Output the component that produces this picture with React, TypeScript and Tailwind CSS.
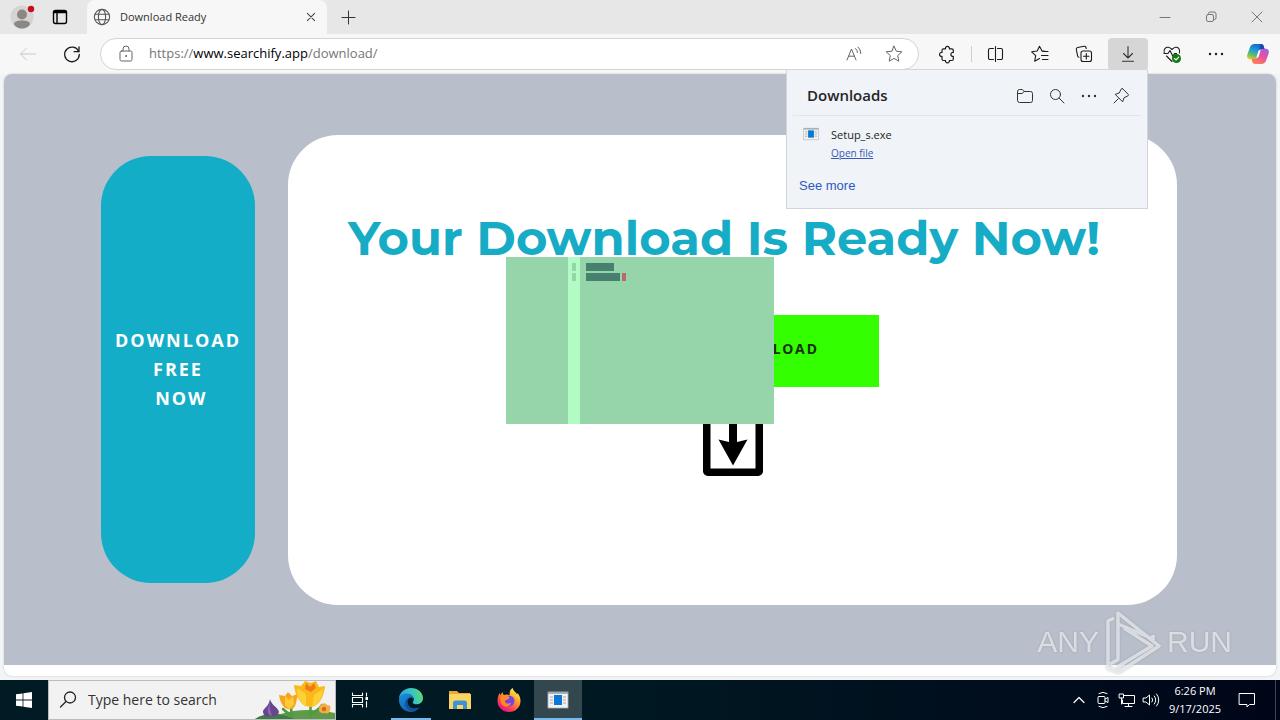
import type { ReactNode } from "react";

type IconProps = { children: ReactNode; size?: number; className?: string; box?: string; width?: number };

const Icon = ({ children, size = 20, className = "", box = "0 0 20 20", width = 1 }: IconProps) => (
    <svg
        width={size}
        height={size}
        viewBox={box}
        fill="none"
        stroke="currentColor"
        strokeWidth={width}
        strokeLinecap="round"
        strokeLinejoin="round"
        className={className}
        aria-hidden="true"
    >
        {children}
    </svg>
);

const STAR = "M10 2.2 L12.3 7.2 L17.8 7.8 L13.7 11.6 L14.8 17.2 L10 14.4 L5.2 17.2 L6.3 11.6 L2.2 7.8 L7.7 7.2 Z";

const ToolButton = ({ label, children }: { label: string; children: ReactNode }) => (
    <button type="button" aria-label={label} className="flex h-8 w-10 shrink-0 items-center justify-center rounded text-[#1b1b1b]">
        {children}
    </button>
);

const Dots = () => (
    <Icon>
        <g fill="currentColor" stroke="none">
            <circle cx="4" cy="10" r="1.2" />
            <circle cx="10" cy="10" r="1.2" />
            <circle cx="16" cy="10" r="1.2" />
        </g>
    </Icon>
);

const ExeIcon = ({ size }: { size: number }) => (
    <svg width={size} height={size} viewBox="0 0 22 22" aria-hidden="true">
        <rect x="1" y="3" width="20" height="16" fill="#f2f2f2" stroke="#a9b4bd" strokeWidth="0.8" />
        <path d="M1 4h20" stroke="#8d999f" strokeWidth="1.4" />
        <path d="M3 8h3M3 11h3M3 14h3M16 8h3M16 11h3M16 14h3" stroke="#a5a5a5" strokeWidth="1.2" />
        <rect x="7" y="6" width="8" height="10" fill="#0b78d8" />
    </svg>
);

const TabStrip = () => (
    <div className="flex h-[34px] items-stretch bg-[#e7e7e7]">
        <button type="button" aria-label="Profile" className="flex w-11 items-center justify-center">
            <svg width="26" height="26" viewBox="0 0 26 26" aria-hidden="true">
                <circle cx="13" cy="13" r="11.5" fill="#d6d3d1" />
                <circle cx="13" cy="10.5" r="5" fill="#8b8785" />
                <path d="M5 20.500c0-3 3-4 8-4s8 1 8 4c-1.800 2.500-4.500 4-8 4s-6.200-1.500-8-4z" fill="#8b8785" />
                <circle cx="22" cy="5" r="3.200" fill="#c50f1f" />
            </svg>
        </button>
        <button type="button" aria-label="Tab actions" className="flex w-8 items-center justify-center text-black">
            <Icon width={1.4}>
                <rect x="3.500" y="3.500" width="13" height="13" rx="2" />
                <path d="M4 5h12" strokeWidth="2.400" />
                <path d="M7 6v10" />
            </Icon>
        </button>
        <div className="ml-[11px] flex w-60 items-center rounded-t-lg bg-[#f7f7f7] pl-[6px] pr-2">
            <Icon size={18} className="text-[#555]" width={1.2}>
                <circle cx="10" cy="10" r="8.500" />
                <ellipse cx="10" cy="10" rx="4" ry="8.500" />
                <path d="M2.500 7h15M2.500 13h15" />
            </Icon>
            <span className="ml-[9px] flex-1 text-[11px] text-[#333]">Download Ready</span>
            <button type="button" aria-label="Close tab" className="text-[#444]">
                <Icon size={16} width={1.3}>
                    <path d="M5.500 5.500l9 9M14.500 5.500l-9 9" />
                </Icon>
            </button>
        </div>
        <button type="button" aria-label="New tab" className="flex w-[42px] items-center justify-center text-[#333]">
            <Icon width={1}>
                <path d="M10.500 4v13M4 10.500h13" />
            </Icon>
        </button>
        <div className="ml-auto flex text-[#777]">
            <button type="button" aria-label="Minimize" className="flex w-[46px] items-center justify-center">
                <Icon width={1}><path d="M5 10.500h10" /></Icon>
            </button>
            <button type="button" aria-label="Restore" className="flex w-[46px] items-center justify-center">
                <Icon width={1}>
                    <rect x="5.500" y="7.500" width="7" height="7" rx="1.500" />
                    <path d="M7.500 7V6.500a1.500 1.500 0 0 1 1.500-1.500h4a2 2 0 0 1 2 2v4a1.500 1.500 0 0 1-1.500 1.500h-.5" />
                </Icon>
            </button>
            <button type="button" aria-label="Close" className="flex w-[46px] items-center justify-center">
                <Icon width={1}><path d="M5 5l10 10M15 5l-10 10" /></Icon>
            </button>
        </div>
    </div>
);

const DownloadsPanel = () => (
    <section className="absolute right-0 top-[31px] z-20 w-[362px] border border-[#d3d5dc] bg-[#f0f3f8] pb-3">
        <header className="mx-1.5 flex h-[46px] items-center border-b border-[#e2e5ea] pl-3.5 pt-[6px]">
            <h2 className="flex-1 text-[15px] font-semibold text-[#242424]">Downloads</h2>
            <div className="flex text-[#333]">
                <button type="button" aria-label="Open downloads folder" className="flex w-8 justify-center">
                    <Icon>
                        <path d="M2.500 5.500a2 2 0 0 1 2-2h2.800l1.900 2h6.300a2 2 0 0 1 2 2v7a2 2 0 0 1-2 2h-11a2 2 0 0 1-2-2z" />
                        <path d="M2.500 7.500h4.600l2.100-2" />
                    </Icon>
                </button>
                <button type="button" aria-label="Search downloads" className="flex w-8 justify-center">
                    <Icon>
                        <circle cx="8.500" cy="8.500" r="5" />
                        <path d="M12.200 12.200l4.800 4.800" />
                    </Icon>
                </button>
                <button type="button" aria-label="More options" className="flex w-8 justify-center">
                    <Dots />
                </button>
                <button type="button" aria-label="Pin" className="mr-1 flex w-8 justify-center">
                    <Icon>
                        <path d="M11.700 2.800l5.500 5.500c.5.500.3 1.200-.3 1.500l-3.900 2-1.400 4-7.400-7.400 4-1.400 2-3.900c.3-.6 1-.8 1.500-.3z" />
                        <path d="M7.300 12.700L3 17" />
                    </Icon>
                </button>
            </div>
        </header>
        <div className="flex pl-4 pt-2.5">
            <ExeIcon size={16} />
            <div className="ml-3">
                <p className="text-[11px] leading-[18px] text-[#242424]">Setup_s.exe</p>
                <a href="#open" className="block text-[10px] leading-[18px] text-[#3559b5] underline">Open file</a>
            </div>
        </div>
        <a href="#more" className="ml-3 mt-3.5 block font-['Liberation_Sans'] text-[13px] leading-5 text-[#2d5abc]">See more</a>
    </section>
);

const Toolbar = () => (
    <div className="flex h-10 items-start gap-1 bg-[#f7f7f7] px-1 pt-1">
        <button type="button" aria-label="Back" disabled className="ml-1 flex h-8 w-10 items-center justify-center text-[#c9c9c9]">
            <Icon><path d="M17.500 10h-15M8.500 4l-6 6 6 6" /></Icon>
        </button>
        <ToolButton label="Refresh">
            <Icon width={1.3}>
                <path d="M16.700 7.500A7.300 7.300 0 1 0 17.300 10.500" />
                <path d="M17 2.800v4.900h-4.900" />
            </Icon>
        </ToolButton>
        <div className="mx-1 flex h-8 flex-1 items-center rounded-full border border-[#d3d4d8] bg-white pl-[15px] pr-3.5 text-[#666]">
            <Icon>
                <rect x="4" y="7" width="12" height="10" rx="1.500" />
                <path d="M7 7V5a3 3 0 0 1 6 0v2" />
                <circle cx="10" cy="12" r=".5" fill="currentColor" />
            </Icon>
            {/* the address is shown with its host in black */}
            <a href="#address" className="ml-[13px] flex-1 text-[13px] text-[#767676]">
                https://<span className="text-black">www.searchify.app</span>/download/
            </a>
            <button type="button" aria-label="Read aloud" className="mr-5">
                <Icon>
                    <path d="M3 16L7.500 5L12 16M4.600 12.200h5.900" />
                    <path d="M11.500 4.500a5 5 0 0 1 2 4M14 3a8 8 0 0 1 2.800 6.500" />
                </Icon>
            </button>
            <button type="button" aria-label="Add to favorites">
                <Icon><path d={STAR} /></Icon>
            </button>
        </div>
        <ToolButton label="Extensions">
            <Icon width={1.2}>
                <path d="M6.500 4.800h2a2 2 0 1 1 3.900 0h2.400a1.500 1.500 0 0 1 1.500 1.500v2.200a2 2 0 1 0 0 3.900v2.600a1.500 1.500 0 0 1-1.500 1.500h-2.400a2 2 0 1 1-3.900 0h-2a1.500 1.500 0 0 1-1.500-1.500v-2.600a2 2 0 1 1 0-3.900V6.300a1.500 1.500 0 0 1 1.500-1.500z" />
            </Icon>
        </ToolButton>
        <span className="mt-2 h-4 w-px bg-[#cfcfcf]" />
        <ToolButton label="Split screen">
            <Icon width={1.1}>
                <path d="M7.500 4.500H4a1.500 1.500 0 0 0-1.500 1.500v8a1.500 1.500 0 0 0 1.500 1.500h3.500M11.500 4.500H15a1.500 1.500 0 0 1 1.500 1.500v8a1.500 1.500 0 0 1-1.500 1.500h-3.500M9.500 2.500v15" />
            </Icon>
        </ToolButton>
        <ToolButton label="Favorites">
            <Icon width={1.1}>
                <path d="M16 7.500l-4-.6L9.500 2.300 7.200 7l-5.500.8 4 3.900-1 5.500 4.800-2.600M12.500 7.500h5.500M11.500 11.500h6.500M12.500 15.500h5.500" />
            </Icon>
        </ToolButton>
        <ToolButton label="Collections">
            <Icon width={1.1}>
                <rect x="7" y="7" width="10.500" height="10.500" rx="2" />
                <path d="M12.300 9.500v5.500M9.500 12.300h5.500M5 13.200c-.8-.2-1.200-.7-1.400-1.400L2.300 5.500c-.2-1 .3-1.800 1.300-2L10 2.300c1-.2 1.800.3 2 1.300l.3.900" />
            </Icon>
        </ToolButton>
        <div className="relative">
            <button type="button" aria-label="Downloads" className="flex h-8 w-10 items-center justify-center rounded bg-[#d6d6d6] text-[#333]">
                <Icon width={1.1}>
                    <path d="M10 2.500v11.500M5.500 9.500l4.500 4.500 4.500-4.500M4.500 17.300h11" />
                </Icon>
            </button>
            <DownloadsPanel />
        </div>
        <ToolButton label="Browser essentials">
            <Icon width={1.1}>
                <path d="M2.200 9C1 5 4 3 6.300 3.300 8 3.500 9 4.500 10 5.500c1-1 2-2 3.700-2.200C16 3 18.500 5 17.500 9M4.500 12l5.500 5.500M2 9.500h4L8 6.500l3 6 1.500-3h2" />
                <circle cx="14.500" cy="14.500" r="4.500" fill="#107c10" stroke="none" />
                <path d="M12.500 14.500l1.500 1.500 2.700-2.800" stroke="#fff" />
            </Icon>
        </ToolButton>
        <ToolButton label="Settings and more"><Dots /></ToolButton>
        <button type="button" aria-label="Copilot" className="flex h-8 w-9 items-center justify-center">
            <svg width="24" height="24" viewBox="0 0 24 24" aria-hidden="true">
                <defs>
                    <linearGradient id="cpA" x1="0.600" y1="0" x2="0.200" y2="1">
                        <stop offset="0" stopColor="#1266c8" />
                        <stop offset="0.450" stopColor="#21a0d8" />
                        <stop offset="0.750" stopColor="#69c15c" />
                        <stop offset="1" stopColor="#f2c61f" />
                    </linearGradient>
                    <linearGradient id="cpB" x1="0.800" y1="0" x2="0.300" y2="1">
                        <stop offset="0" stopColor="#a45de8" />
                        <stop offset="0.500" stopColor="#e8519b" />
                        <stop offset="1" stopColor="#fb8354" />
                    </linearGradient>
                </defs>
                <path d="M8.500 2h6.500c1.500 0 2.300.9 2.700 2.200L18.500 7h-3.200c-1.500 0-2.300.8-2.700 2.200L10.700 15c-.5 1.500-1.300 2.200-2.800 2.200H4C1.500 17.200.7 15 1.300 12.700L3.900 5.500C4.700 3.300 6 2 8.500 2z" fill="url(#cpA)" />
                <path d="M15.500 22H9c-1.500 0-2.300-.9-2.700-2.200L5.500 17h3c1.500 0 2.400-.8 2.900-2.200L13.300 9c.5-1.500 1.300-2.200 2.800-2.200H20c2.500 0 3.300 2.200 2.700 4.500l-2.600 7.200C19.300 20.700 18 22 15.500 22z" fill="url(#cpB)" />
                <path d="M14.700 2c1.600 0 2.600.8 3 2.200L18.500 7h-3.300c-1.200 0-2 .6-2.500 1.700z" fill="#194aa8" />
                <path d="M10.500 15.500l2.400-7.300h1.800l-2.400 7.300z" fill="#fff" />
            </svg>
        </button>
    </div>
);

const Watermark = () => (
    <div className="absolute bottom-0.5 right-11 flex items-center gap-1.5 font-['Liberation_Sans_Narrow','Liberation_Sans',sans-serif] text-[30px] leading-none text-white/60 drop-shadow-[0_0_1px_#8a8f99]">
        <span>ANY</span>
        <svg width="56" height="64" viewBox="0 0 56 64" fill="none" stroke="currentColor" strokeWidth="3.5" strokeLinejoin="round" aria-hidden="true">
            <path d="M9 8L3 11v47l11 4L54 36L13 3v46M13 14l35 15v-4M14 62v-6L47 36L19 18M5 54l9-5" />
        </svg>
        <span>RUN</span>
    </div>
);

const DownloadPage = () => (
    <main className="relative mx-1 flex flex-1 flex-col overflow-hidden rounded-lg bg-white shadow-[0_0_2px_#bbb]">
        <div className="flex flex-1 items-center gap-[33px] bg-[#b8bfcb] pl-[97px] pr-[99px] font-['Open_Sans',sans-serif]">
            <a
                href="#free"
                className="flex min-h-[427px] w-[154px] shrink-0 items-center justify-center rounded-[50px] bg-[#13adc7] text-center text-lg font-bold leading-[29px] tracking-[2px] text-white"
            >
                <span>DOWNLOAD<br />FREE<br />&nbsp;NOW</span>
            </a>
            <div className="flex flex-1 flex-col rounded-[50px] bg-white px-[60px] pb-[129px] pt-[74px]">
                <h1 className="whitespace-nowrap font-['Montserrat','Inter',sans-serif] text-5xl font-bold leading-[58px] text-[#17acc5]">
                    Your Download Is Ready Now!
                </h1>
                <button type="button" className="mt-12 flex h-[72px] w-[293px] items-center justify-end self-center bg-[#33ff00] pb-1 pr-[60px] font-['Noto_Sans',sans-serif] text-sm font-bold tracking-[2px] text-[#16330c]">
                    DOWNLOAD
                </button>
                <svg width="60" height="60" viewBox="0 0 60 60" className="mt-[29px] self-center" aria-hidden="true">
                    <rect x="3.750" y="3.750" width="52.500" height="52.500" rx="1" fill="#fff" stroke="#000" strokeWidth="7.500" strokeLinejoin="round" />
                    <path d="M26 0h8v26l10.500-2.500L30 49.500 15.500 23.500 26 26z" fill="#000" />
                </svg>
            </div>
        </div>
        <div className="h-[11px]" />
        <Watermark />
    </main>
);

const FloatingWindow = () => (
    <div className="absolute left-1/2 top-[257px] z-10 flex h-[167px] w-[268px] -translate-x-1/2 bg-[#96d5a9]">
        <div className="ml-[62px] flex w-3 flex-col items-center gap-0.5 bg-[#b3fbc4] pt-1.5">
            <span className="h-2 w-1 bg-[#96d5a9]" />
            <span className="h-2 w-1 bg-[#96d5a9]" />
        </div>
        <div className="flex flex-col gap-0.5 pl-1.5 pt-1.5">
            <span className="h-2 w-7 bg-[#488070]" />
            <div className="flex gap-0.5">
                <span className="h-2 w-[34px] bg-[#488070]" />
                <span className="h-2 w-1 bg-[#b86b64]" />
            </div>
        </div>
    </div>
);

const TaskButton = ({ label, children, state = "" }: { label: string; children: ReactNode; state?: string }) => (
    <button type="button" aria-label={label} className={`relative flex h-10 w-12 items-center justify-center ${state === "active" ? "bg-[#33474f]" : ""}`}>
        {children}
        {state === "open" && <span className="absolute inset-x-1 bottom-0 h-0.5 bg-[#76b9ed]" />}
        {state === "active" && <span className="absolute inset-x-0 bottom-0 h-0.5 bg-[#76b9ed]" />}
    </button>
);

const Taskbar = () => (
    <footer className="mt-1 flex h-10 bg-linear-to-r from-[#001b24] via-[#001822] to-[#000618]">
        <button type="button" aria-label="Start" className="flex w-12 items-center justify-center">
            <svg width="16" height="16" viewBox="0 0 16 16" fill="#fff" aria-hidden="true">
                <path d="M0 2.300l6.600-.9v6.200H0zM7.400 1.300L16 0v7.600H7.400zM0 8.400h6.600v6.200L0 13.700zM7.400 8.400H16V16l-8.600-1.200z" />
            </svg>
        </button>
        <div className="relative flex w-72 items-center border border-[#b9bcbe] bg-[#f2f2f2] pl-2.5">
            <Icon className="text-[#222]" width={1.3}>
                <circle cx="11" cy="7.500" r="5.500" />
                <path d="M7 11.500L1.500 17" />
            </Icon>
            <input
                type="text"
                aria-label="Search"
                placeholder="Type here to search"
                className="ml-[9px] w-40 bg-transparent text-sm text-[#333] outline-none placeholder:text-[#333]"
            />
            <svg width="80" height="38" viewBox="0 0 80 38" className="absolute bottom-0 right-0" aria-hidden="true">
                <path d="M0 38c8-5 17-6 26-5 14-5 36-5 54-1v6z" fill="#5f9a4c" />
                <path d="M0 38c8-5 20-7 34-2l6 2z" fill="#3f7c45" />
                <path d="M36 35c1-6 0-10-1-14M55 34c1-8 1-12 0-17M55 33c5-2 9-4 12-9M36 34c-4-2-6-4-8-6" fill="none" stroke="#4e9a3c" strokeWidth="2.500" strokeLinecap="round" />
                <path d="M15 18c1 6 8 8 9 13-1 4-5 5-9 4-5 1-7-1-7-5 2-4 6-5 7-12z" fill="#69458f" />
                <path d="M15 21c-1 4 0 8 2 14-4-1-6-4-2-14z" fill="#8d66b3" />
                <path d="M24 14l6 1 3-4 4 4 6-2-2 9c-1 5-4 7-8 6-5-1-8-7-9-14z" fill="#f9a51b" />
                <path d="M30 15l4 4 4-4 1 8-5 5-4-4z" fill="#fdca38" />
                <path d="M39 4l7 1 4-5 6 2 5-2 3 6 6-1c-1 10-5 19-13 21-10 0-17-10-18-22z" fill="#fbb81b" />
                <path d="M42 7l9 6v13c-5-3-9-9-9-19zM68 8l-9 6-2 12c6-3 11-9 11-18z" fill="#fdd035" />
                <path d="M51 2l4 4 4-4 2 5-5 4-6-3z" fill="#ec7b1a" />
                <path d="M67 23c3-2 5 1 5 1 4 0 4 3 3 5 0 3-3 4-5 3-4 1-6-1-6-4 0-2 1-4 3-5z" fill="#f7ac43" />
                <circle cx="69" cy="28" r="2.200" fill="#d2691e" />
            </svg>
        </div>
        <TaskButton label="Task view">
            <Icon className="text-white" width={1.100}>
                <path d="M2.500 3v2.500h10V3M2.500 17v-2.500h10V17M2.500 7.500v5h10v-5zM16.500 3v3M16.500 11.500V17" />
                <rect x="15.500" y="7" width="2.500" height="3" fill="currentColor" stroke="none" />
            </Icon>
        </TaskButton>
        <div className="ml-[3px] flex gap-px">
            <TaskButton label="Edge" state="open">
                <svg width="24" height="24" viewBox="0 0 24 24" aria-hidden="true">
                    <defs>
                        <linearGradient id="edA" x1="0" y1="0.500" x2="1" y2="0.300">
                            <stop offset="0" stopColor="#2ba5e5" />
                            <stop offset="0.550" stopColor="#35c4c8" />
                            <stop offset="1" stopColor="#64da65" />
                        </linearGradient>
                        <linearGradient id="edB" x1="0" y1="0" x2="0.800" y2="1">
                            <stop offset="0" stopColor="#1e91dc" />
                            <stop offset="1" stopColor="#0b58a9" />
                        </linearGradient>
                    </defs>
                    <path d="M0 11C0 5 5.300 0 12 0c7 0 12 4.600 12 10 0 4-3 6.300-6.300 6.300-2.700 0-4-1-4-1.800 0-.7 1.100-1.200 1.100-3.200C14.800 8.500 11.800 6 8 6 4 6 1 8 0 11z" fill="url(#edA)" />
                    <path d="M0 12c0-4 3.500-6.500 8-6.500 4.300 0 6.500 3 6.500 5.500-1-1.200-2.400-1.700-3.500-1.400-3 1-4 4.700-2.300 7.900 2 3.700 6.700 4.600 12 1.700C18.500 22.300 15.300 24 12 24 5.300 24 0 18.700 0 12z" fill="url(#edB)" />
                    <path d="M11 9.600c-5 1-6.500 7-2.800 11 3 3.200 8 3 12.600-1.700-4.200 2.300-8.300 1.800-10.600-1-2.200-2.700-2-6.500.8-8.300z" fill="#124f96" />
                </svg>
            </TaskButton>
            <TaskButton label="File Explorer">
                <svg width="22" height="20" viewBox="0 0 22 20" aria-hidden="true">
                    <path d="M0 1h8l2 2h11v4H0z" fill="#e6a93a" />
                    <path d="M0 4h22v15H0z" fill="#fcd462" />
                    <path d="M4 19v-6c0-1.500 1-2.500 2.500-2.500h9c1.500 0 2.500 1 2.500 2.500v6h-4v-4H8v4z" fill="#3d94d3" />
                </svg>
            </TaskButton>
            <TaskButton label="Firefox">
                <svg width="24" height="24" viewBox="0 0 24 24" aria-hidden="true">
                    <defs>
                        <linearGradient id="ffA" x1="0.800" y1="0.050" x2="0.200" y2="0.900">
                            <stop offset="0" stopColor="#fff04a" />
                            <stop offset="0.400" stopColor="#ff9a2b" />
                            <stop offset="0.750" stopColor="#ff4350" />
                            <stop offset="1" stopColor="#e01582" />
                        </linearGradient>
                    </defs>
                    <path d="M2.500 5l1 2 1.800-3 1.400 3 3-.5 3 .5c-.5-3 .5-5.500 3-7 .5 3 3 4 4.500 6.500l.3-1.500c2 2.200 3 5 3 8C23.500 19.300 18.600 24 12 24S.5 19.300.5 13c0-3 .7-5.500 2-8z" fill="url(#ffA)" />
                    <circle cx="12" cy="13" r="5.500" fill="#7542e5" />
                    <path d="M4 8c3-1.500 6-1.300 8.500 1.500l-1 1.700c-2 .2-3.300.8-3.500 2.300 0 2 4 3 6 1-.5 3-3 4.500-6 4-4-1-5.500-6-4-10.500z" fill="#ff8a23" />
                </svg>
            </TaskButton>
            <TaskButton label="Setup" state="active"><ExeIcon size={22} /></TaskButton>
        </div>
        <div className="ml-auto flex items-center text-white">
            <button type="button" aria-label="Show hidden icons" className="flex w-6 justify-center">
                <Icon width={1.2}><path d="M5 12.500l5-5 5 5" /></Icon>
            </button>
            <button type="button" aria-label="Meet now" className="flex w-6 justify-center">
                <Icon>
                    <rect x="5" y="6.500" width="7" height="7" rx="1" />
                    <path d="M12 9l3-1.500v5L12 11M6 3.500q4-2.500 8 0M6 16.500q4 2.500 8 0" />
                </Icon>
            </button>
            <button type="button" aria-label="Network" className="flex w-6 justify-center">
                <Icon>
                    <path d="M7 5.500h10.500v8H5.500V10M11.500 13.500V16M8 16.500h7M2.500 4h4v4h-4zM4.500 8v6" />
                </Icon>
            </button>
            <button type="button" aria-label="Volume" className="flex w-6 justify-center">
                <Icon>
                    <path d="M2.500 8h2.500l3.500-3v10L5 12H2.500zM11 8q1.500 2 0 4M13.300 6q3 4 0 8M15.600 4q4.500 6 0 12" />
                </Icon>
            </button>
            <time className="w-16 text-center text-[11px] leading-[18px]">6:26 PM<br />9/17/2025</time>
            <button type="button" aria-label="Notifications" className="flex w-10 justify-center">
                <Icon><path d="M2.500 3.500h15v11h-5l-2.500 2.500V14.500H2.500z" /></Icon>
            </button>
            <span className="ml-2 mr-1 h-10 w-px bg-[#3a4554]" />
        </div>
    </footer>
);

const App = () => {
    return (
        <div className="relative flex min-h-screen flex-col bg-[#f3f4f6] font-['Segoe_UI','Open_Sans',sans-serif]">
            <TabStrip />
            <Toolbar />
            <DownloadPage />
            <FloatingWindow />
            <Taskbar />
        </div>
    );
};

export default App;
